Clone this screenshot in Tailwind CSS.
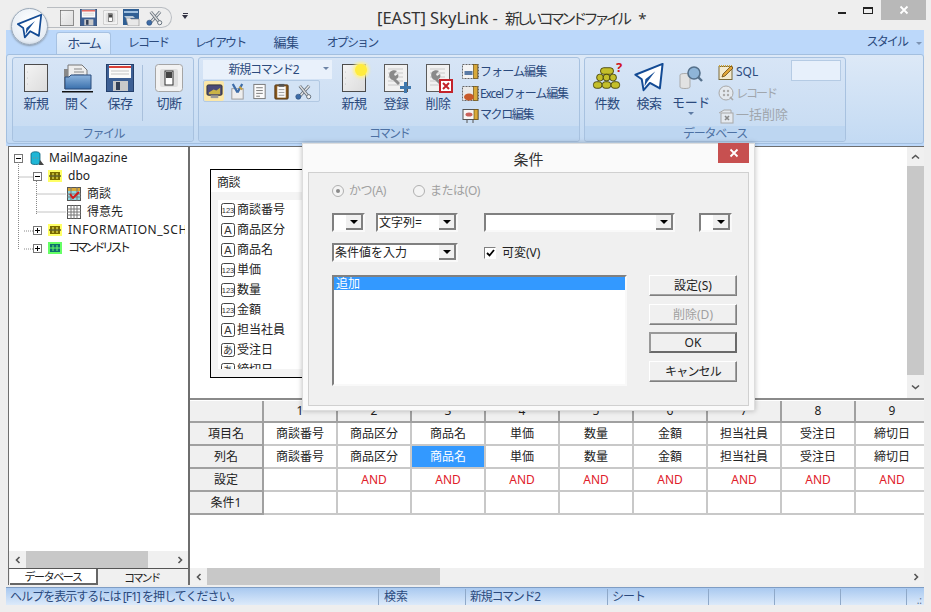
<!DOCTYPE html>
<html lang="ja">
  <head>
    <meta charset="UTF-8" />
    <title>[EAST] SkyLink - 新しいコマンドファイル *</title>
    <script src="https://cdn.jsdelivr.net/npm/@tailwindcss/browser@4"></script>
  </head>
  <body class="bg-[#eeeeee]">
    <!-- icon sheet -->
    <svg width="0" height="0" class="absolute">
      <defs>
        <linearGradient id="paper" x1="0" y1="0" x2="1" y2="1"><stop offset="0" stop-color="#f4f4f4" /><stop offset="1" stop-color="#dcdcdc" /></linearGradient>
        <linearGradient id="folder" x1="0" y1="0" x2="0" y2="1"><stop offset="0" stop-color="#8db4de" /><stop offset="1" stop-color="#3a70ad" /></linearGradient>
        <symbol id="doc" viewBox="0 0 24 28">
          <rect x="0.5" y="0.5" width="23" height="27" fill="url(#paper)" stroke="#4b4b4b" />
          <circle cx="3.5" cy="8" r="0.5" fill="#bbb" /><circle cx="3.5" cy="14" r="0.5" fill="#bbb" /><circle cx="3.5" cy="20" r="0.5" fill="#bbb" />
        </symbol>
        <symbol id="save" viewBox="0 0 28 28">
          <rect x="0.5" y="0.5" width="27" height="27" fill="#3c5f94" stroke="#24406c" />
          <rect x="3" y="1" width="22" height="13" fill="#fbfbfb" />
          <rect x="3" y="2" width="22" height="2" fill="#d9423a" />
          <path d="M5 7h18M5 10h18" stroke="#c5c5c5" />
          <rect x="7" y="17" width="15" height="10" fill="#c9c9c9" />
          <rect x="10" y="18" width="4" height="8" fill="#333f55" />
        </symbol>
        <symbol id="qatopen" viewBox="0 0 17 17">
          <rect x="0" y="0" width="16" height="16" fill="#2f5f94" />
          <rect x="1" y="2" width="14" height="2" fill="#9fc0e0" />
          <path d="M3 9h4l1 1h8v7H5z" fill="#e8e8e8" stroke="#888" stroke-width="0.6" />
          <path d="M1 7h9l2 2H3z" fill="#b9c9d8" />
        </symbol>
        <symbol id="open" viewBox="0 0 32 30">
          <path d="M6 2h14l5 5v10H6z" fill="#eeeeee" stroke="#777" />
          <path d="M12 6h8M12 9h10M12 12h10" stroke="#888" />
          <path d="M2 6h4v20H2z" fill="#888" />
          <path d="M3 14h4l2-2h20v14H3z" fill="url(#folder)" stroke="#2a4d7c" />
          <path d="M0 28h31v1.5H0z" fill="#111" />
        </symbol>
        <symbol id="switch" viewBox="0 0 28 28">
          <rect x="0.5" y="0.5" width="27" height="27" rx="3" fill="#f2f2f2" stroke="#a5a5a5" />
          <rect x="5" y="5" width="18" height="18" rx="2" fill="#dedede" />
          <rect x="10" y="7" width="8" height="14" fill="#fff" stroke="#333" />
          <rect x="11" y="8" width="6" height="6" fill="#444" />
        </symbol>
        <symbol id="tools" viewBox="0 0 18 18">
          <path d="M4 15L15 3" stroke="#5f6b78" stroke-width="3.2" fill="none" />
          <path d="M4 15L15 3" stroke="#e6e6e6" stroke-width="1.6" fill="none" />
          <path d="M5 3l9 11" stroke="#5f6b78" stroke-width="3.2" fill="none" />
          <path d="M5 3l9 11" stroke="#dcdcdc" stroke-width="1.6" fill="none" />
          <circle cx="14.5" cy="14.5" r="2.2" fill="#f2f2f2" stroke="#5f6b78" />
          <circle cx="3.5" cy="14.5" r="2.7" fill="#3d6ca8" stroke="#294a77" stroke-width="0.6" />
        </symbol>
        <symbol id="wrenchdoc" viewBox="0 0 24 28">
          <rect x="0.5" y="0.5" width="23" height="27" fill="#f1f1f1" stroke="#5a5a5a" />
          <path d="M4 5h15M4 9h15M4 13h15M4 17h15M4 21h12" stroke="#c9c9c9" />
          <path d="M6 8c2-2 5-2 7-1l-3 3 1 2 3-2c1 2 0 5-2 5l4 4-2 2-5-5c-3 0-5-5-3-8z" fill="#8a8a8a" />
        </symbol>
        <symbol id="coins" viewBox="0 0 30 30">
          <g fill="#c4bf2a" stroke="#3d3a05" stroke-width="0.9">
            <rect x="8" y="4" width="14" height="7" rx="3.5" />
            <rect x="4" y="11" width="7" height="7" rx="3" /><rect x="11" y="11" width="7" height="7" rx="3" /><rect x="18" y="11" width="7" height="7" rx="3" />
            <rect x="0.5" y="19" width="9" height="7" rx="3" /><rect x="10" y="19" width="9" height="7" rx="3" /><rect x="19.5" y="19" width="9" height="7" rx="3" />
          </g>
        </symbol>
        <symbol id="plane" viewBox="0 0 32 32">
          <path d="M31 1L1 13l7 5 2 12 7-8 11 6z" fill="#ffffff" stroke="#124a94" stroke-width="2.2" stroke-linejoin="round" />
          <path d="M23 9L12 18l-1 8 3-5z" fill="#174f98" />
        </symbol>
        <symbol id="modeicon" viewBox="0 0 26 28">
          <path d="M2 11c0-2 10-2 10 0v12c0 2-10 2-10 0z" fill="#e2e2e2" stroke="#aaa" />
          <circle cx="16" cy="9" r="6" fill="#8fb5d8" stroke="#55708a" stroke-width="1.6" />
          <path d="M20 13l4 4" stroke="#55708a" stroke-width="2.4" />
        </symbol>
        <symbol id="monitor" viewBox="0 0 18 18">
          <rect x="1" y="2" width="16" height="11" rx="1.5" fill="#4a4a78" stroke="#333" />
          <path d="M3 10l5-3 3 1 4-3v7H3z" fill="#c9b347" />
          <path d="M5 13h8v3H5z" fill="#9a9a9a" />
        </symbol>
        <symbol id="edit" viewBox="0 0 18 18">
          <rect x="3" y="6" width="12" height="11" fill="#eeeeee" stroke="#9a9a9a" />
          <path d="M4 1l5 9M14 1L9 10" stroke="#3d6ca8" stroke-width="2.4" />
          <path d="M11 4l3 3" stroke="#c9a13c" stroke-width="2" />
        </symbol>
        <symbol id="lines" viewBox="0 0 18 18">
          <rect x="3" y="1.5" width="12" height="15" fill="#fbfbfb" stroke="#777" />
          <path d="M5.5 5h7M5.5 8h7M5.5 11h7M5.5 14h4" stroke="#777" />
        </symbol>
        <symbol id="clip" viewBox="0 0 18 18">
          <rect x="2" y="2" width="14" height="15" rx="1" fill="#8a5a1e" stroke="#4f3210" />
          <rect x="4.5" y="3.5" width="9" height="12" fill="#fafafa" />
          <path d="M6 7h6M6 10h6M6 13h6" stroke="#999" />
          <rect x="6" y="1" width="6" height="3" fill="#555" />
        </symbol>
        <symbol id="form" viewBox="0 0 17 17">
          <rect x="0.5" y="1.5" width="16" height="14" fill="#f4f4f4" stroke="#666" stroke-dasharray="2 1" />
          <rect x="11.5" y="1.5" width="4" height="14" fill="#d9a93a" stroke="#6b5215" stroke-width="0.7" />
          <rect x="2.5" y="8" width="8" height="4" fill="#5a7ba6" />
        </symbol>
        <symbol id="formx" viewBox="0 0 17 17">
          <rect x="0.5" y="1.5" width="16" height="14" fill="#e9e9e9" stroke="#666" stroke-dasharray="2 1" />
          <rect x="11.5" y="1.5" width="4" height="14" fill="#d9a93a" stroke="#6b5215" stroke-width="0.7" />
          <ellipse cx="7" cy="12" rx="5" ry="3.5" fill="#c85a2a" />
        </symbol>
        <symbol id="formm" viewBox="0 0 17 17">
          <rect x="1" y="2.5" width="15" height="10" fill="#f7f7f7" stroke="#555" />
          <rect x="12" y="2.5" width="4" height="10" fill="#d9a93a" stroke="#6b5215" stroke-width="0.7" />
          <ellipse cx="7" cy="7.5" rx="3.5" ry="2" fill="#c9605a" />
          <path d="M5 13v3M11 13v3" stroke="#555" />
        </symbol>
        <symbol id="sqlicon" viewBox="0 0 17 17">
          <rect x="1" y="2.5" width="13" height="13" fill="#f3ead0" stroke="#7a6a3a" />
          <path d="M1 2h13" stroke="#c9a13c" stroke-width="2" stroke-dasharray="1 1" />
          <path d="M4 13l1-3 8-8 2 2-8 8z" fill="#e0a53a" stroke="#6b4a10" stroke-width="0.8" />
        </symbol>
        <symbol id="rec" viewBox="0 0 17 17">
          <circle cx="8" cy="8" r="7" fill="#e4e9ef" stroke="#a8a8a8" />
          <circle cx="6" cy="6" r="1.2" fill="#aaa" /><circle cx="10" cy="6" r="1.2" fill="#aaa" /><circle cx="6" cy="10" r="1.2" fill="#aaa" /><circle cx="10" cy="10" r="1.2" fill="#aaa" />
          <path d="M12 12l3 3" stroke="#a8a8a8" stroke-width="1.6" />
        </symbol>
        <symbol id="bulk" viewBox="0 0 17 17">
          <path d="M1 6l5-3h7v3" fill="#e4e9ef" stroke="#a8a8a8" />
          <rect x="3" y="6" width="12" height="10" fill="#e4e9ef" stroke="#a8a8a8" />
          <path d="M7 9l4 4M11 9l-4 4" stroke="#8a8a8a" stroke-width="1.6" />
        </symbol>
        <symbol id="db" viewBox="0 0 15 15">
          <path d="M1 3c0-3 9-3 9 0v9c0 2-9 2-9 0z" fill="#1fb6d6" stroke="#0d5f78" stroke-width="0.8" />
          <path d="M10 9l4 5h-5z" fill="#444" />
        </symbol>
        <symbol id="schema" viewBox="0 0 14 14">
          <rect x="0" y="1" width="14" height="12" fill="#ffff66" />
          <rect x="2" y="3" width="10" height="8" fill="#7a6a00" />
          <path d="M0 7h14M5 4v6M9 4v6" stroke="#ffff66" />
          <path d="M1 7h12" stroke="#111" />
        </symbol>
        <symbol id="schemag" viewBox="0 0 14 14">
          <rect x="0" y="1" width="14" height="12" fill="#66ff66" />
          <rect x="2" y="3" width="10" height="8" fill="#0f6f6f" />
          <path d="M0 7h14M5 4v6M9 4v6" stroke="#66ff66" />
        </symbol>
        <symbol id="tbl" viewBox="0 0 14 14">
          <rect x="0.5" y="0.5" width="13" height="13" fill="#ffffff" stroke="#555" />
          <path d="M0 4h14M0 7h14M0 10h14M4 0v14M7 0v14M10 0v14" stroke="#777" />
        </symbol>
        <symbol id="tblsel" viewBox="0 0 14 14">
          <rect x="0.5" y="0.5" width="13" height="13" fill="#8fd6e0" stroke="#555" />
          <rect x="1" y="1" width="12" height="3" fill="#d9a93a" />
          <path d="M0 7h14M0 10h14M4 0v14M10 0v14" stroke="#777" />
          <path d="M3 7l3 4 6-6" stroke="#d21a1a" stroke-width="2" fill="none" />
        </symbol>
        <symbol id="fnum" viewBox="0 0 14 14">
          <rect x="0.5" y="0.5" width="13" height="13" rx="2" fill="#fff" stroke="#444" />
          <text x="7" y="10" text-anchor="middle" font-size="7.5" font-family="Liberation Sans" fill="#333">123</text>
        </symbol>
        <symbol id="fstr" viewBox="0 0 14 14">
          <rect x="0.5" y="0.5" width="13" height="13" rx="2" fill="#fff" stroke="#444" />
          <text x="7" y="11" text-anchor="middle" font-size="11" font-family="Liberation Sans" fill="#333">A</text>
        </symbol>
        <symbol id="fdate" viewBox="0 0 14 14">
          <rect x="0.5" y="0.5" width="13" height="13" rx="2" fill="#fff" stroke="#444" />
          <text x="7" y="11" text-anchor="middle" font-size="10" font-family="Noto Sans CJK JP" fill="#333">あ</text>
        </symbol>
      </defs>
    </svg>

    <div class="relative w-[931px] h-[612px] overflow-hidden bg-[#eeeeee] text-[12px] text-[#222] [font-family:'Noto_Sans','Noto_Sans_CJK_JP',sans-serif]">
      <!-- Title bar -->
      <div class="relative flex h-[30px] items-start">
        <div class="ml-[47px] mt-[7px] flex h-[21px] w-[125px] items-center gap-[5px] rounded-r-full border border-l-0 border-[#b9bdc2] pl-[13px]">
          <svg class="h-[16px] w-[14px]"><use href="#doc" /></svg>
          <svg class="ml-[1px] h-[17px] w-[17px]"><use href="#save" /></svg>
          <svg class="ml-[1px] h-[15px] w-[15px]"><use href="#switch" /></svg>
          <svg class="h-[17px] w-[17px]"><use href="#qatopen" /></svg>
          <svg class="ml-[1px] h-[17px] w-[17px]"><use href="#tools" /></svg>
        </div>
        <div class="ml-[10px] mt-[13px] flex flex-col items-center gap-[1px]">
          <div class="h-[1px] w-[5px] bg-[#334]"></div>
          <div class="h-0 w-0 border-x-[3px] border-t-[4px] border-x-transparent border-t-[#334]"></div>
        </div>
        <div class="ml-[189px] mt-[6px] flex items-baseline whitespace-nowrap leading-[24px] text-[#333]">
          <span class="w-[128px] text-[16.5px]">[EAST] SkyLink -</span>
          <span class="text-[15px] tracking-[-3.8px]">新しいコマンドファイル</span>
          <span class="ml-[10px] text-[15px]">*</span>
        </div>
        <div class="ml-auto mr-[5px] flex items-start">
          <div class="mt-[12px] mr-[17px] h-[2px] w-[8px] bg-[#222]"></div>
          <div class="mt-[7px] mr-[8px] h-[7px] w-[10px] border border-t-2 border-[#222]"></div>
          <div class="flex h-[20px] w-[45px] items-center justify-center bg-[#b8b8b8]">
            <svg width="10" height="10" viewBox="0 0 10 10"><path d="M1.5 1.5l7 7M8.5 1.5l-7 7" stroke="#fff" stroke-width="1.8" /></svg>
          </div>
        </div>
      </div>

      <!-- Ribbon tabs -->
      <div class="ml-[6px] mr-[7px] flex h-[24px] items-end bg-[#bcd8fa] text-[12px] tracking-[-1.9px] text-[#2b4a7d]">
        <div class="ml-[50px] flex h-[22px] w-[55px] items-center justify-center rounded-t-[3px] border border-b-0 border-[#a7c2e2] bg-gradient-to-b from-[#e8f1fb] to-[#d6e6f7] text-[13px] tracking-[-2px]">ホーム</div>
        <div class="flex h-[22px] w-[74px] items-center justify-center">レコード</div>
        <div class="flex h-[22px] w-[70px] items-center justify-center">レイアウト</div>
        <div class="flex h-[22px] w-[62px] items-center justify-center text-[13px] tracking-[-0.5px]">編集</div>
        <div class="flex h-[22px] w-[70px] items-center justify-center">オプション</div>
        <div class="ml-auto mr-[9px] flex h-[24px] items-center">スタイル</div>
        <div class="mb-[9px] mr-[2px] h-0 w-0 border-x-[3px] border-t-[3px] border-x-transparent border-t-[#7d93b2]"></div>
      </div>

      <!-- Ribbon body -->
      <div class="ml-[6px] mr-[7px] h-[92px] bg-[#bcd8fa]">
        <div class="flex h-[90px] gap-[4px] rounded-[3px] border border-[#a3bfdf] bg-gradient-to-b from-[#dde9f7] to-[#c3daf3] pl-[5px] pt-[2px]">
          <!-- ファイル -->
          <div class="flex h-[85px] w-[182px] flex-col rounded-[3px] border border-[#a8c2e0] bg-gradient-to-b from-[#d7e5f6] to-[#c6dbf2]">
            <div class="flex h-[68px] pl-[2px] text-[13px] tracking-[-0.4px] text-[#2b4a7d]">
              <div class="flex w-[42px] flex-col items-center pt-[6px]"><svg class="h-[28px] w-[24px]"><use href="#doc" /></svg><span class="mt-[2px]">新規</span></div>
              <div class="flex w-[41px] flex-col items-center pt-[5px]"><svg class="h-[30px] w-[32px]"><use href="#open" /></svg><span class="mt-[1px]">開く</span></div>
              <div class="flex w-[44px] flex-col items-center pt-[6px]"><svg class="h-[28px] w-[28px]"><use href="#save" /></svg><span class="mt-[2px]">保存</span></div>
              <div class="mt-[7px] h-[56px] w-[1px] bg-[#a9c0dc]"></div>
              <div class="ml-[6px] flex w-[40px] flex-col items-center pt-[6px]"><svg class="h-[28px] w-[28px]"><use href="#switch" /></svg><span class="mt-[2px]">切断</span></div>
            </div>
            <div class="flex h-[15px] flex-1 items-center justify-center rounded-b-[3px] bg-[#bdd6f1] text-[12px] tracking-[-1.5px] text-[#4d71a3]">ファイル</div>
          </div>
          <!-- コマンド -->
          <div class="flex h-[85px] w-[382px] flex-col rounded-[3px] border border-[#a8c2e0] bg-gradient-to-b from-[#d7e5f6] to-[#c6dbf2]">
            <div class="flex h-[68px] text-[#2b4a7d]">
              <div class="ml-[4px] mt-[2px] w-[129px]">
                <div class="relative flex h-[19px] items-center justify-center bg-[#e9f1fb] pr-[8px] tracking-[-1.3px]">
                  新規コマンド2
                  <div class="absolute right-[3px] top-[7px] h-0 w-0 border-x-[3px] border-t-[3px] border-x-transparent border-t-[#6d84a6]"></div>
                </div>
                <div class="mt-[1px] flex h-[22px] w-[117px] items-center gap-[5px] rounded-[2px] border border-[#b2c9e3] bg-[#d3e3f5]">
                  <div class="flex h-[20px] w-[20px] items-center justify-center rounded-[2px] bg-[#fbe7a8]"><svg class="h-[17px] w-[17px]"><use href="#monitor" /></svg></div>
                  <svg class="h-[17px] w-[17px]"><use href="#edit" /></svg>
                  <svg class="h-[17px] w-[17px]"><use href="#lines" /></svg>
                  <svg class="h-[17px] w-[17px]"><use href="#clip" /></svg>
                  <svg class="h-[17px] w-[17px]"><use href="#tools" /></svg>
                </div>
              </div>
              <div class="ml-[1px] flex text-[13px] tracking-[-0.4px]">
                <div class="relative flex w-[42px] flex-col items-center pt-[6px]">
                  <svg class="h-[28px] w-[24px]"><use href="#doc" /></svg><span class="mt-[2px]">新規</span>
                  <div class="absolute left-[22px] top-[6px] h-[12px] w-[12px] rounded-full bg-[#ffec3d] shadow-[0_0_3px_2px_#fff28a]"></div>
                </div>
                <div class="relative flex w-[42px] flex-col items-center pt-[6px]">
                  <svg class="h-[28px] w-[24px]"><use href="#wrenchdoc" /></svg><span class="mt-[2px]">登録</span>
                  <svg class="absolute left-[25px] top-[24px]" width="11" height="11" viewBox="0 0 11 11"><path d="M4 0h3v4h4v3H7v4H4V7H0V4h4z" fill="#3f78ad" /></svg>
                </div>
                <div class="relative flex w-[42px] flex-col items-center pt-[6px]">
                  <svg class="h-[28px] w-[24px]"><use href="#wrenchdoc" /></svg><span class="mt-[2px]">削除</span>
                  <svg class="absolute left-[22px] top-[21px]" width="14" height="14" viewBox="0 0 14 14"><rect width="14" height="14" fill="#c3232b" /><rect x="2" y="2" width="10" height="10" fill="#fff" /><path d="M4 4l6 6M10 4l-6 6" stroke="#c3232b" stroke-width="2" /></svg>
                </div>
              </div>
              <div class="ml-[3px] flex flex-col pt-[3px] tracking-[-0.9px]">
                <div class="flex h-[22px] items-center gap-[1px]"><svg class="h-[17px] w-[17px]"><use href="#form" /></svg>フォーム編集</div>
                <div class="flex h-[22px] items-center gap-[1px]"><svg class="h-[17px] w-[17px]"><use href="#formx" /></svg><span class="tracking-[-1.1px]">Excelフォーム編集</span></div>
                <div class="flex h-[22px] items-center gap-[1px]"><svg class="h-[17px] w-[17px]"><use href="#formm" /></svg><span class="tracking-[-1.4px]">マクロ編集</span></div>
              </div>
            </div>
            <div class="flex h-[15px] flex-1 items-center justify-center rounded-b-[3px] bg-[#bdd6f1] tracking-[-2px] text-[#4d71a3]">コマンド</div>
          </div>
          <!-- データベース -->
          <div class="flex h-[85px] w-[262px] flex-col rounded-[3px] border border-[#a8c2e0] bg-gradient-to-b from-[#d7e5f6] to-[#c6dbf2]">
            <div class="flex h-[68px] text-[#2b4a7d]">
              <div class="ml-[1px] flex text-[13px] tracking-[-0.4px]">
                <div class="relative flex w-[42px] flex-col items-center pt-[6px]">
                  <svg class="h-[28px] w-[30px]"><use href="#coins" /></svg><span class="mt-[2px]">件数</span>
                  <span class="absolute left-[30px] top-[2px] text-[13px] font-bold leading-[14px] text-[#d0141c]">?</span>
                </div>
                <div class="flex w-[42px] flex-col items-center pt-[5px]"><svg class="h-[29px] w-[32px]"><use href="#plane" /></svg><span class="mt-[2px]">検索</span></div>
                <div class="flex w-[42px] flex-col items-center pt-[6px]">
                  <svg class="h-[28px] w-[26px]"><use href="#modeicon" /></svg><span class="mt-[2px] leading-[16px]">モード</span>
                  <div class="mt-[2px] h-0 w-0 border-x-[3px] border-t-[3px] border-x-transparent border-t-[#5d7aa3]"></div>
                </div>
              </div>
              <div class="ml-[6px] flex flex-col pt-[3px]">
                <div class="flex h-[22px] items-center gap-[1px] text-[#2b4a7d]"><svg class="h-[17px] w-[17px]"><use href="#sqlicon" /></svg>SQL</div>
                <div class="flex h-[21px] items-center gap-[1px] tracking-[-2px] text-[#a0a6ad]"><svg class="h-[17px] w-[17px]"><use href="#rec" /></svg>レコード</div>
                <div class="flex h-[22px] items-center gap-[1px] text-[13px] text-[#a0a6ad]"><svg class="h-[17px] w-[17px]"><use href="#bulk" /></svg>一括削除</div>
              </div>
              <div class="ml-auto mr-[4px] mt-[2px] h-[21px] w-[50px] border border-[#b5cbe4] bg-[#e7f0fb]"></div>
            </div>
            <div class="flex h-[15px] flex-1 items-center justify-center rounded-b-[3px] bg-[#bdd6f1] tracking-[-1.2px] text-[#4d71a3]">データベース</div>
          </div>
        </div>
      </div>

      <!-- Main area -->
      <div class="ml-[8px] mr-[7px] flex h-[439px] border-t border-[#6e6e6e] bg-white">
        <!-- Left pane -->
        <div class="flex w-[182px] flex-col border-x-2 border-l border-[#6e6e6e]">
          <div class="relative flex-1 pt-[2px] text-[12px] leading-[18px]">
            <svg class="absolute left-0 top-0" width="90" height="110" fill="none" stroke="#888" stroke-dasharray="1 1">
              <path d="M9.5 15V85M24 11h6M27.5 34V67M9.5 30h15M27.5 47h30M27.5 65h30M15 84h15M15 102h15M9.5 85V102" />
            </svg>
            <div class="flex h-[18px] items-center pl-[5px]">
              <span class="flex h-[9px] w-[9px] items-center justify-center border border-[#777] bg-white"><span class="h-[1px] w-[5px] bg-black"></span></span>
              <svg class="ml-[7px] h-[15px] w-[15px]"><use href="#db" /></svg><span class="ml-[4px]">MailMagazine</span>
            </div>
            <div class="flex h-[18px] items-center pl-[24px]">
              <span class="flex h-[9px] w-[9px] items-center justify-center border border-[#777] bg-white"><span class="h-[1px] w-[5px] bg-black"></span></span>
              <svg class="ml-[6px] h-[14px] w-[14px]"><use href="#schema" /></svg><span class="ml-[6px]">dbo</span>
            </div>
            <div class="flex h-[18px] items-center pl-[58px]"><svg class="h-[14px] w-[14px]"><use href="#tblsel" /></svg><span class="ml-[6px]">商談</span></div>
            <div class="flex h-[18px] items-center pl-[58px]"><svg class="h-[14px] w-[14px]"><use href="#tbl" /></svg><span class="ml-[6px]">得意先</span></div>
            <div class="flex h-[18px] items-center pl-[24px]">
              <span class="relative flex h-[9px] w-[9px] shrink-0 items-center justify-center border border-[#777] bg-white"><span class="h-[1px] w-[5px] bg-black"></span><span class="absolute h-[5px] w-[1px] bg-black"></span></span>
              <svg class="ml-[6px] h-[14px] w-[14px] shrink-0"><use href="#schema" /></svg><span class="ml-[6px] w-[117px] overflow-hidden whitespace-nowrap tracking-[0.55px]">INFORMATION_SCHEMA</span>
            </div>
            <div class="flex h-[18px] items-center pl-[24px]">
              <span class="relative flex h-[9px] w-[9px] items-center justify-center border border-[#777] bg-white"><span class="h-[1px] w-[5px] bg-black"></span><span class="absolute h-[5px] w-[1px] bg-black"></span></span>
              <svg class="ml-[6px] h-[14px] w-[14px]"><use href="#schemag" /></svg><span class="ml-[6px] text-[12px] tracking-[-3.5px]">コマンドリスト</span>
            </div>
          </div>
          <!-- left scrollbar -->
          <div class="flex h-[17px] items-center bg-[#f0f0f0]">
            <div class="flex w-[17px] justify-center"><svg width="8" height="8" viewBox="0 0 8 8"><path d="M5.5 1L2.5 4l3 3" stroke="#555" stroke-width="1.6" fill="none" /></svg></div>
            <div class="h-full w-[122px] bg-[#c8c8c8]"></div>
            <div class="ml-auto flex w-[17px] justify-center"><svg width="8" height="8" viewBox="0 0 8 8"><path d="M2.5 1l3 3-3 3" stroke="#555" stroke-width="1.6" fill="none" /></svg></div>
          </div>
          <!-- left tabs -->
          <div class="flex h-[17px] border-t border-[#555] bg-[#f0f0f0] pl-[1px] text-[11px] leading-[15px] tracking-[-1.4px]">
            <div class="flex w-[88px] items-center justify-center border-r-2 border-b-2 border-[#666] bg-white">データベース</div>
            <div class="flex w-[87px] items-center justify-center tracking-[-2.2px]">コマンド</div>
          </div>
        </div>

        <!-- Right pane -->
        <div class="flex min-w-0 flex-1 flex-col">
          <div class="flex h-[253px] shrink-0 border-b-2 border-[#8a8a8a]">
            <div class="relative flex-1 overflow-hidden pl-[20px] pt-[22px]">
              <!-- table card -->
              <div class="h-[209px] w-[200px] border border-black">
                <div class="h-[22px] pl-[6px] pt-[4px] leading-[18px] tracking-[-0.5px]">商談</div>
                <div class="h-[185px] overflow-hidden bg-[#f4f4f4] pl-[7px] pt-[8px]">
                  <div id="fields" class="h-[169px] overflow-hidden bg-white pl-[3px]"></div>
                </div>
              </div>
            </div>
            <!-- vertical scrollbar -->
            <div class="flex w-[17px] flex-col bg-[#f0f0f0]">
              <div class="flex h-[19px] items-center justify-center"><svg width="9" height="8" viewBox="0 0 9 8"><path d="M1 5.5l3.5-3 3.5 3" stroke="#555" stroke-width="1.6" fill="none" /></svg></div>
              <div class="h-[209px] bg-[#c8c8c8]"></div>
              <div class="flex flex-1 items-center justify-center"><svg width="9" height="8" viewBox="0 0 9 8"><path d="M1 2.5l3.5 3 3.5-3" stroke="#555" stroke-width="1.6" fill="none" /></svg></div>
            </div>
          </div>
          <!-- condition grid -->
          <div class="min-h-0 flex-1 overflow-hidden pt-[1px]">
            <div id="grid" class="grid h-[114px] grid-cols-[repeat(10,74px)] grid-rows-[22px_23px_23px_23px_23px] text-[12px]"></div>
          </div>
          <!-- bottom scrollbar -->
          <div class="flex h-[17px] shrink-0 items-center bg-[#f0f0f0]">
            <div class="flex w-[17px] justify-center"><svg width="8" height="8" viewBox="0 0 8 8"><path d="M5.5 1L2.5 4l3 3" stroke="#555" stroke-width="1.6" fill="none" /></svg></div>
            <div class="h-full w-[233px] bg-[#c8c8c8]"></div>
            <div class="ml-auto flex w-[17px] justify-center"><svg width="8" height="8" viewBox="0 0 8 8"><path d="M2.5 1l3 3-3 3" stroke="#555" stroke-width="1.6" fill="none" /></svg></div>
          </div>
        </div>
      </div>

      <!-- Status bar -->
      <div class="ml-[6px] mr-[7px] mt-[2px] flex h-[18px] items-center border-t border-[#7f9dc4] bg-gradient-to-b from-[#a9c9f0] to-[#dceafa] text-[12px] text-[#2b4a7d]">
        <div class="w-[373px] truncate border-r border-[#8fa9c9] pl-[4px] leading-[16px] tracking-[-0.95px]">ヘルプを表示するには [F1] を押してください。</div>
        <div class="w-[87px] border-r border-[#8fa9c9] pl-[5px] leading-[16px]">検索</div>
        <div class="w-[142px] border-r border-[#8fa9c9] pl-[4px] leading-[16px] tracking-[-1.3px]">新規コマンド2</div>
        <div class="w-[101px] border-r border-[#8fa9c9] pl-[4px] leading-[16px] tracking-[-1px]">シート</div>
        <div class="h-[16px] w-[66px] border-r border-[#8fa9c9]"></div>
        <div class="h-[16px] w-[66px] border-r border-[#8fa9c9]"></div>
        <div class="h-[16px] w-[66px] border-r border-[#8fa9c9]"></div>
        <div class="ml-auto mr-[2px] mt-[6px] text-[10px] leading-[10px] text-[#5b6f8c]">.:</div>
      </div>

      <!-- Orb button over the title bar -->
      <div class="absolute left-[11px] top-[8px] flex h-[37px] w-[37px] items-center justify-center rounded-full border border-[#9aa8b8] bg-[radial-gradient(circle_at_50%_35%,#ffffff,#e6edf5_70%,#a9b6c6)] shadow-[0_1px_2px_#8898aa]">
        <svg class="h-[25px] w-[25px]"><use href="#plane" /></svg>
      </div>

      <!-- 条件 dialog -->
      <div class="absolute left-[302px] top-[143px] h-[268px] w-[453px] border border-[#dddddd] bg-[#fafafa] px-[5px] shadow-[0_0_5px_#00000040]">
        <div class="relative h-[28px] pt-[4px] text-center text-[15px] leading-[22px] text-[#333]">条件
          <div class="absolute right-[0px] top-[-1px] flex h-[20px] w-[31px] items-center justify-center bg-[#c75050]">
            <svg width="10" height="10" viewBox="0 0 10 10"><path d="M1.5 1.5l7 7M8.5 1.5l-7 7" stroke="#fff" stroke-width="1.8" /></svg>
          </div>
        </div>
        <div class="h-[234px] border border-[#d0d0d0] bg-[#f0f0f0] pl-[23px] pt-[9px]">
          <!-- radios -->
          <div class="flex h-[18px] items-center text-[#a0a0a0]">
            <span class="flex h-[12px] w-[12px] items-center justify-center rounded-full border border-[#b0b0b0] bg-[#f4f4f4]"><span class="h-[4px] w-[4px] rounded-full bg-[#8a8a8a]"></span></span>
            <span class="ml-[5px] tracking-[-0.4px]">かつ(A)</span>
            <span class="ml-[27px] h-[12px] w-[12px] rounded-full border border-[#b0b0b0] bg-[#f4f4f4]"></span>
            <span class="ml-[5px] tracking-[-0.4px]">または(O)</span>
          </div>
          <!-- selects -->
          <div class="mt-[13px] flex h-[19px]">
            <div class="flex w-[33px] justify-end border-2 border-[#f9f9f9] border-l-[#808080] border-t-[#808080] bg-white"><span class="flex w-[17px] items-center justify-center border-r-2 border-b-2 border-[#808080] bg-[#f0f0f0]"><span class="h-0 w-0 border-x-[4px] border-t-[4px] border-x-transparent border-t-black"></span></span></div>
            <div class="ml-[11px] flex w-[82px] justify-between border-2 border-[#f9f9f9] border-l-[#808080] border-t-[#808080] bg-white pl-[1px] leading-[15px]">文字列=<span class="flex w-[17px] items-center justify-center border-r-2 border-b-2 border-[#808080] bg-[#f0f0f0]"><span class="h-0 w-0 border-x-[4px] border-t-[4px] border-x-transparent border-t-black"></span></span></div>
            <div class="ml-[26px] flex w-[191px] justify-end border-2 border-[#f9f9f9] border-l-[#808080] border-t-[#808080] bg-white"><span class="flex w-[17px] items-center justify-center border-r-2 border-b-2 border-[#808080] bg-[#f0f0f0]"><span class="h-0 w-0 border-x-[4px] border-t-[4px] border-x-transparent border-t-black"></span></span></div>
            <div class="ml-[24px] flex w-[33px] justify-end border-2 border-[#f9f9f9] border-l-[#808080] border-t-[#808080] bg-white"><span class="flex w-[17px] items-center justify-center border-r-2 border-b-2 border-[#808080] bg-[#f0f0f0]"><span class="h-0 w-0 border-x-[4px] border-t-[4px] border-x-transparent border-t-black"></span></span></div>
          </div>
          <div class="mt-[11px] flex h-[19px] items-center">
            <div class="flex h-[19px] w-[126px] justify-between border-2 border-[#f9f9f9] border-l-[#808080] border-t-[#808080] bg-white pl-[1px] leading-[15px]">条件値を入力<span class="flex w-[17px] items-center justify-center border-r-2 border-b-2 border-[#808080] bg-[#f0f0f0]"><span class="h-0 w-0 border-x-[4px] border-t-[4px] border-x-transparent border-t-black"></span></span></div>
            <div class="ml-[26px] flex h-[12px] w-[12px] items-center justify-center border border-[#808080] border-r-white border-b-white bg-white">
              <svg width="9" height="8" viewBox="0 0 9 8"><path d="M1 4l2.5 2.5L8 1" stroke="#000" stroke-width="1.8" fill="none" /></svg>
            </div>
            <span class="ml-[6px]">可変(V)</span>
          </div>
          <!-- list and buttons -->
          <div class="mt-[13px] flex">
            <div class="h-[111px] w-[295px] border-2 border-[#f9f9f9] border-l-[#808080] border-t-[#808080] bg-white">
              <div class="h-[13px] bg-[#3399ff] pl-[2px] text-[12px] leading-[13px] text-white">追加</div>
            </div>
            <div class="ml-[22px] flex w-[88px] flex-col">
              <div class="flex h-[21px] items-center justify-center border border-white border-r-[#808080] border-b-[#808080] bg-[#f0f0f0] shadow-[inset_-1px_-1px_0_#a0a0a0]">設定(S)</div>
              <div class="mt-[8px] flex h-[21px] items-center justify-center border border-white border-r-[#808080] border-b-[#808080] bg-[#f0f0f0] text-[#a0a0a0] shadow-[inset_-1px_-1px_0_#a0a0a0]">削除(D)</div>
              <div class="mt-[7px] flex h-[21px] items-center justify-center border-2 border-[#6a6a6a] border-t-[#999999] border-l-[#999999] bg-[#f0f0f0]">OK</div>
              <div class="mt-[8px] flex h-[21px] items-center justify-center border border-white border-r-[#808080] border-b-[#808080] bg-[#f0f0f0] tracking-[-0.8px] shadow-[inset_-1px_-1px_0_#a0a0a0]">キャンセル</div>
            </div>
          </div>
        </div>
      </div>
    </div>

    <script>
      const fields = [
        ["fnum", "商談番号"], ["fstr", "商品区分"], ["fstr", "商品名"],
        ["fnum", "単価"], ["fnum", "数量"], ["fnum", "金額"],
        ["fstr", "担当社員"], ["fdate", "受注日"], ["fdate", "締切日"],
      ];
      document.getElementById("fields").innerHTML = fields
        .map(
          ([icon, name]) =>
            `<div class="flex h-[20px] items-center gap-[2px]"><svg class="h-[14px] w-[14px]"><use href="#${icon}" /></svg>${name}</div>`
        )
        .join("");

      const cols = ["商談番号", "商品区分", "商品名", "単価", "数量", "金額", "担当社員", "受注日", "締切日"];
      const headCell = "flex items-center justify-center bg-[#f0f0f0] border-r-2 border-b-2 border-[#a0a0a0]";
      const cell = "flex items-center justify-center bg-white border-r-2 border-b-2 border-[#c8c8c8]";
      const selected = "flex items-center justify-center bg-[#3399ff] text-white border-r-2 border-b-2 border-[#c8c8c8]";
      const andCell = "flex items-center justify-center bg-white text-[#e0202a] border-r-2 border-b-2 border-[#c8c8c8]";

      let html = `<div class="${headCell}"></div>`;
      cols.forEach((c, i) => (html += `<div class="${headCell}">${i + 1}</div>`));
      html += `<div class="${headCell}">項目名</div>`;
      cols.forEach((c) => (html += `<div class="${cell}">${c}</div>`));
      html += `<div class="${headCell}">列名</div>`;
      cols.forEach((c, i) => (html += `<div class="${i === 2 ? selected : cell}">${c}</div>`));
      html += `<div class="${headCell}">設定</div><div class="${cell}"></div>`;
      cols.slice(1).forEach(() => (html += `<div class="${andCell}">AND</div>`));
      html += `<div class="${headCell}">条件1</div>`;
      cols.forEach(() => (html += `<div class="${cell}"></div>`));
      document.getElementById("grid").innerHTML = html;
    </script>
  </body>
</html>
